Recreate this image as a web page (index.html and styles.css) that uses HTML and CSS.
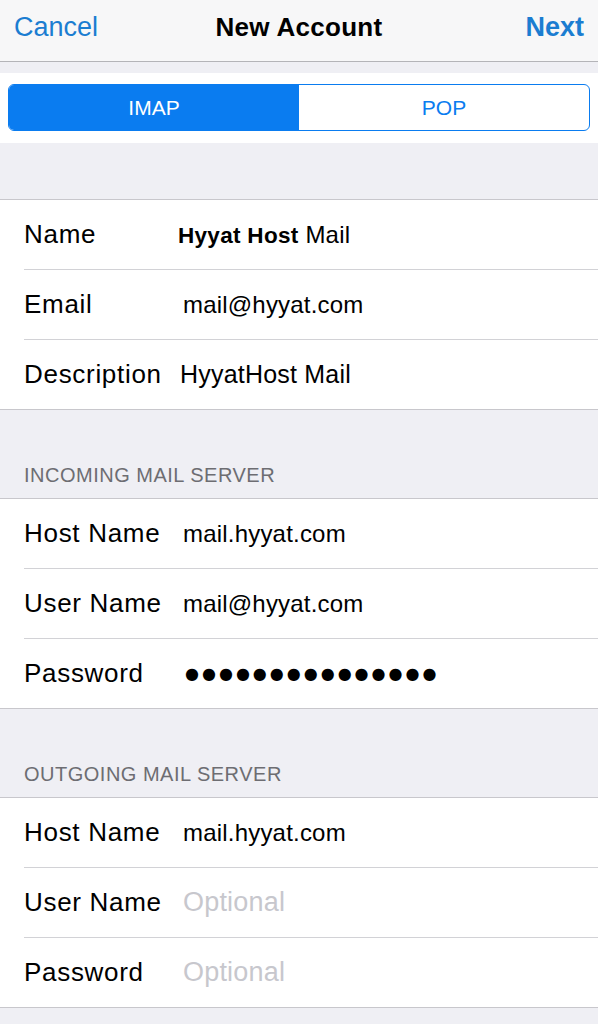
FILE: index.html
```html
<!DOCTYPE html>
<html lang="en">
<head>
  <meta charset="UTF-8" />
  <meta name="viewport" content="width=device-width, initial-scale=1.0" />
  <title>New Account</title>
  <link rel="stylesheet" href="styles.css">
</head>
<body>
  <div class="navbar">
    <span class="nav-btn">Cancel</span>
    <span class="nav-title">New Account</span>
    <span class="nav-btn next">Next</span>
  </div>

  <div class="seg-band">
    <div class="segmented">
      <div class="seg active">IMAP</div>
      <div class="seg">POP</div>
    </div>
  </div>

  <div class="spacer"></div>

  <div class="group">
    <div class="row">
      <span class="label">Name</span>
      <span class="value name-value"><b>Hyyat Host</b> Mail</span>
    </div>
    <div class="row">
      <span class="label">Email</span>
      <span class="value">mail@hyyat.com</span>
    </div>
    <div class="row">
      <span class="label">Description</span>
      <span class="value desc-value">HyyatHost Mail</span>
    </div>
  </div>

  <div class="section-header">INCOMING MAIL SERVER</div>
  <div class="group">
    <div class="row">
      <span class="label">Host Name</span>
      <span class="value">mail.hyyat.com</span>
    </div>
    <div class="row">
      <span class="label">User Name</span>
      <span class="value">mail@hyyat.com</span>
    </div>
    <div class="row">
      <span class="label">Password</span>
      <span class="value dots">●●●●●●●●●●●●●●●</span>
    </div>
  </div>

  <div class="section-header">OUTGOING MAIL SERVER</div>
  <div class="group">
    <div class="row">
      <span class="label">Host Name</span>
      <span class="value">mail.hyyat.com</span>
    </div>
    <div class="row">
      <span class="label">User Name</span>
      <span class="value placeholder">Optional</span>
    </div>
    <div class="row">
      <span class="label">Password</span>
      <span class="value placeholder">Optional</span>
    </div>
  </div>
</body>
</html>
```

FILE: styles.css
```css
body {
  margin: 0;
  background-color: #efeff4;
  font-family: "Liberation Sans", Arial, sans-serif;
  color: #000;
}

.navbar {
  height: 62px;
  background-color: #f7f7f8;
  border-bottom: 1px solid #b4b4b8;
  display: grid;
  grid-template-columns: 1fr auto 1fr;
  align-items: start;
  padding: 12px 14px 0 14px;
  box-sizing: border-box;
  font-size: 27px;
  line-height: 30px;
}

.nav-btn {
  color: #1b7dd1;
}

.nav-btn.next {
  font-weight: bold;
  font-size: 27px;
  justify-self: end;
}

.nav-title {
  font-weight: bold;
  font-size: 26px;
  letter-spacing: 0.3px;
}

.seg-band {
  margin-top: 11px;
  background-color: #fff;
  padding: 11px 8px 12px 8px;
}

.segmented {
  display: flex;
  height: 47px;
  border: 1.5px solid #0a7cf0;
  border-radius: 6px;
  overflow: hidden;
  box-sizing: border-box;
}

.seg {
  flex: 1;
  display: flex;
  align-items: center;
  justify-content: center;
  font-size: 21px;
  color: #0a7cf0;
}

.seg.active {
  background-color: #0a7cf0;
  color: #fff;
}

.spacer {
  height: 56px;
}

.group {
  background-color: #fff;
  border-top: 1px solid #c8c7cc;
  border-bottom: 1px solid #c8c7cc;
}

.row {
  display: flex;
  align-items: center;
  height: 69px;
  margin-left: 24px;
  border-bottom: 1px solid #d2d2d6;
  font-size: 26px;
  letter-spacing: 0.7px;
}

.row:last-child {
  border-bottom: none;
}

.label {
  width: 159px;
  flex-shrink: 0;
}

.value {
  font-size: 24px;
  letter-spacing: 0.2px;
}

.name-value {
  margin-left: -5px;
}

.name-value b {
  font-size: 22.5px;
  letter-spacing: 0.3px;
}

.desc-value {
  margin-left: -3px;
  font-size: 25px;
}

.placeholder {
  color: #c7c7cd;
  font-size: 27px;
}

.dots {
  font-family: "DejaVu Sans", sans-serif;
  font-size: 16px;
  letter-spacing: 3px;
  margin-left: 2px;
}

.section-header {
  height: 88px;
  box-sizing: border-box;
  padding: 54px 0 0 24px;
  font-size: 20px;
  letter-spacing: 0.5px;
  color: #6d6d72;
}
```
